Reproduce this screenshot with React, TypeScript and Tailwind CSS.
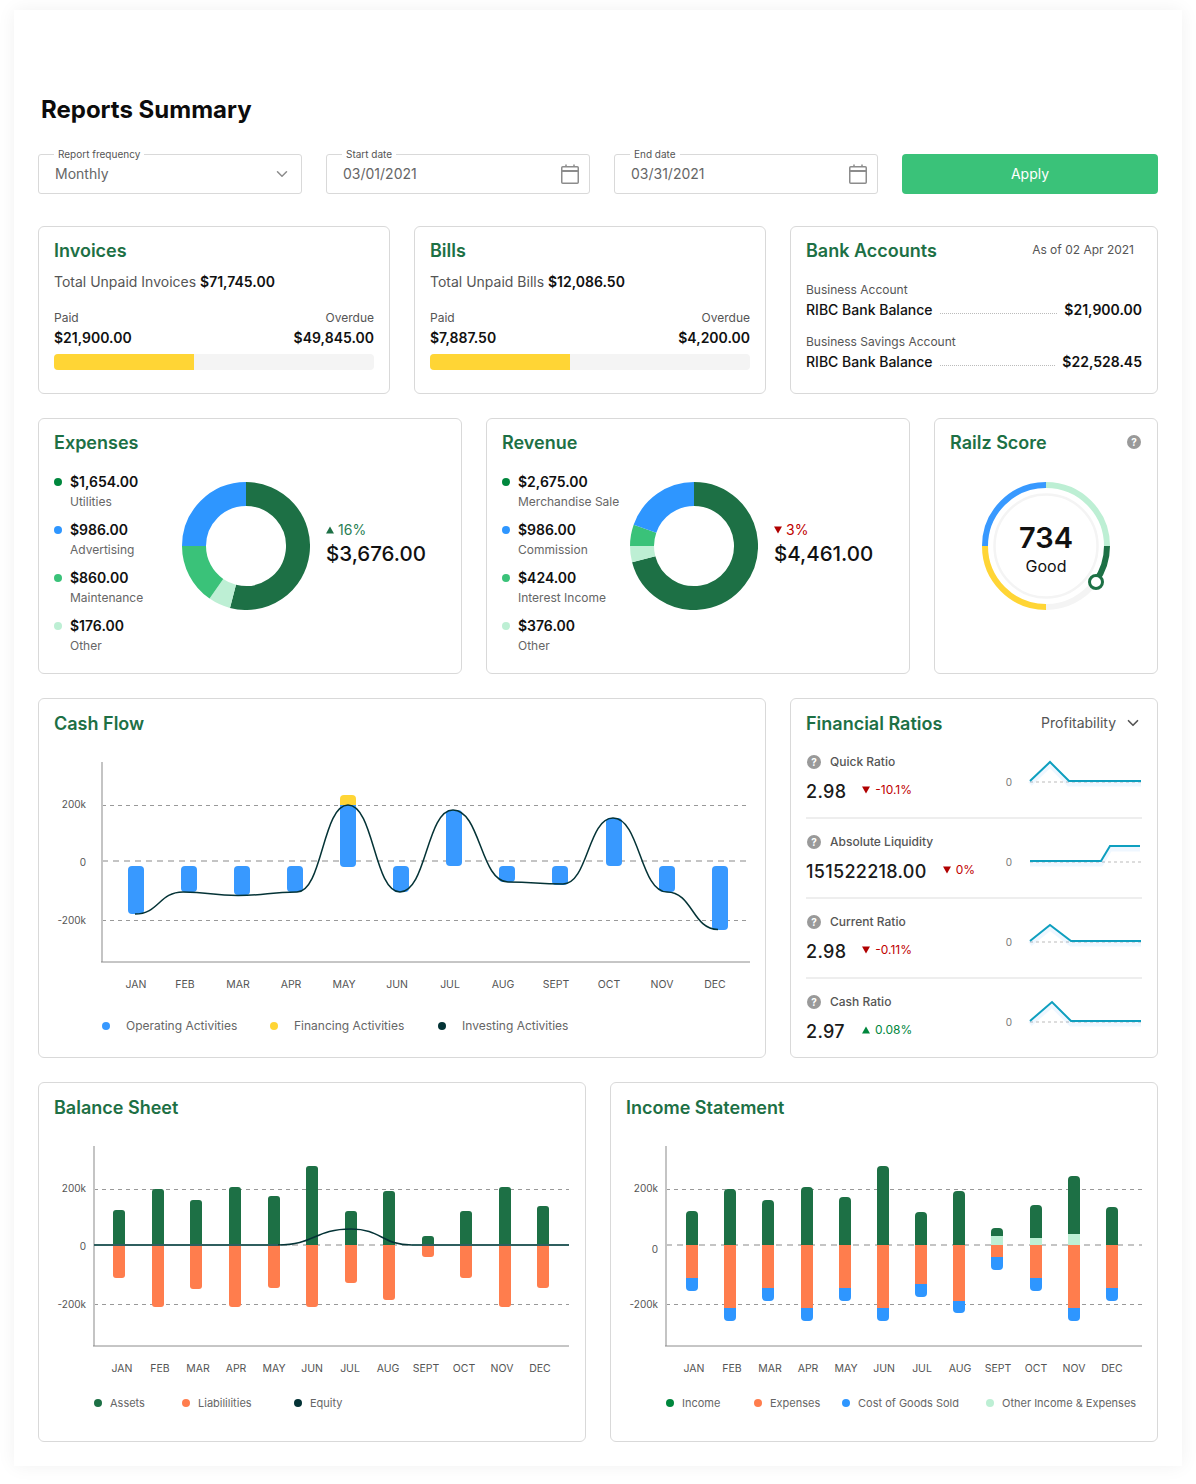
import { ChevronDown } from 'lucide-react';
import type { ReactNode } from 'react';

const DARK = '#1D7045';
const MID = '#3AC279';
const LIGHT = '#BDEFD4';
const BLUE = '#2E96FF';
const YELLOW = '#FFD535';
const ORANGE = '#FF7D4D';
const INK = '#043336';

const point = (cx: number, cy: number, r: number, deg: number) => {
    const rad = ((deg - 90) * Math.PI) / 180;
    return [cx + r * Math.cos(rad), cy + r * Math.sin(rad)];
};

const arc = (cx: number, cy: number, r: number, from: number, to: number) => {
    const [x0, y0] = point(cx, cy, r, from);
    const [x1, y1] = point(cx, cy, r, to);
    return `M${x0} ${y0} A${r} ${r} 0 ${to - from > 180 ? 1 : 0} 1 ${x1} ${y1}`;
};

const seg = (x: number, y0: number, y1: number, w: number, r: number, top: boolean, bottom: boolean) => {
    const t = top ? r : 0;
    const b = bottom ? r : 0;
    return `M${x} ${y0 + t} Q${x} ${y0} ${x + t} ${y0} L${x + w - t} ${y0} Q${x + w} ${y0} ${x + w} ${y0 + t} L${x + w} ${y1 - b} Q${x + w} ${y1} ${x + w - b} ${y1} L${x + b} ${y1} Q${x} ${y1} ${x} ${y1 - b} Z`;
};

const curve = (pts: number[][]) =>
    pts.reduce((d, [x, y], i) => {
        if (i === 0) return `M${x} ${y}`;
        const [px, py] = pts[i - 1];
        const mid = (x - px) / 2;
        return `${d} C${px + mid} ${py} ${x - mid} ${y} ${x} ${y}`;
    }, '');

const Card = ({ className, children }: { className: string; children: ReactNode }) => (
    <div className={`border border-[#d9d9d9] rounded-md bg-white px-[15px] ${className}`}>{children}</div>
);

const Title = ({ children }: { children: ReactNode }) => (
    <h2 className="text-lg leading-6 font-semibold text-[#1D7045]">{children}</h2>
);

const Help = () => (
    <span className="w-3.5 h-3.5 rounded-full bg-[#999] text-white text-[10px] leading-[14px] font-bold text-center shrink-0">?</span>
);

const Calendar = () => (
    <svg width="18" height="20" viewBox="0 0 18 20" fill="none" stroke="#8c8c8c" strokeWidth="1.5">
        <rect x="0.75" y="2.75" width="16.5" height="16.5" rx="1" />
        <path d="M1 7H17" strokeWidth="2" />
        <path d="M5 0.5V3M13 0.5V3" />
    </svg>
);

const Field = ({ label, value, icon }: { label: string; value: string; icon: ReactNode }) => (
    <div className="relative w-[264px] h-10 border border-[#d9d9d9] rounded-[3px] bg-white flex items-center justify-between pl-4 pr-[10px]">
        <span className="absolute left-[15px] top-[-6px] bg-white px-[4px] text-[10px] leading-[11px] text-[#555]">{label}</span>
        <span className="text-sm text-[#666]">{value}</span>
        {icon}
    </div>
);

const Triangle = ({ up, color, size = 8 }: { up: boolean; color: string; size?: number }) => (
    <svg width={size} height={size} viewBox="0 0 8 8" className="shrink-0">
        <path d={up ? 'M4 0.5L8 7.5H0Z' : 'M0 0.5H8L4 7.5Z'} fill={color} />
    </svg>
);

const UnpaidCard = ({ title, label, total, paid, overdue }: { title: string; label: string; total: string; paid: string; overdue: string }) => (
    <Card className="w-[352px] pt-3">
        <Title>{title}</Title>
        <p className="mt-[9px] text-sm leading-5 text-[#555]">
            {label} <span className="font-semibold text-[#111]">{total}</span>
        </p>
        <div className="mt-[18px] flex justify-between text-xs leading-4 text-[#555]">
            <span>Paid</span>
            <span>Overdue</span>
        </div>
        <div className="mt-[2px] flex justify-between text-sm leading-5 font-semibold text-[#111]">
            <span>{paid}</span>
            <span>{overdue}</span>
        </div>
        <div className="mt-[6px] h-4 rounded-sm bg-[#f4f4f4] overflow-hidden">
            <div className="h-full w-[140px] bg-[#FFD535]" />
        </div>
    </Card>
);

const BankRow = ({ label, amount }: { label: string; amount: string }) => (
    <div>
        <div className="text-xs leading-4 text-[#555]">{label}</div>
        <div className="mt-[2px] flex items-center text-sm leading-5 font-medium text-[#111]">
            <span>RIBC Bank Balance</span>
            <span className="flex-1 mx-[7px] mt-[7px] border-b border-dotted border-[#bbb]" />
            <span className="font-semibold">{amount}</span>
        </div>
    </div>
);

type Slice = { color: string; from: number; to: number };

const DonutCard = ({ title, items, slices, up, delta, total }: {
    title: string;
    items: { color: string; amount: string; label: string }[];
    slices: Slice[];
    up: boolean;
    delta: string;
    total: string;
}) => (
    <Card className="w-[424px] h-[256px] pt-3">
        <Title>{title}</Title>
        <div className="mt-[17px] flex">
            <div className="w-[128px] shrink-0">
                {items.map(item => (
                    <div key={item.label} className="h-12">
                        <div className="flex items-center gap-2 text-sm leading-5 font-semibold text-[#111]">
                            <span className="w-2 h-2 rounded-full" style={{ background: item.color }} />
                            {item.amount}
                        </div>
                        <div className="pl-4 text-xs leading-5 text-[#666] whitespace-nowrap">{item.label}</div>
                    </div>
                ))}
            </div>
            <svg width="128" height="128" viewBox="0 0 128 128" className="mt-[10px] shrink-0">
                {slices.map(s => (
                    <path key={s.from} d={arc(64, 64, 52, s.from, s.to)} fill="none" stroke={s.color} strokeWidth="24" />
                ))}
            </svg>
            <div className="ml-4 mt-[48px]">
                <div className={`flex items-center gap-[4px] text-sm leading-5 ${up ? 'text-[#2A7F55]' : 'text-[#C00000]'}`}>
                    <Triangle up={up} color={up ? DARK : '#B00000'} />
                    {delta}
                </div>
                <div className="text-[20.5px] leading-7 font-medium text-[#111]">{total}</div>
            </div>
        </div>
    </Card>
);

const Legend = ({ items, className }: { items: { label: string; color: string; width: string; gap: string }[]; className: string }) => (
    <div className={`flex ${className}`}>
        {items.map(item => (
            <div key={item.label} className={`flex items-center shrink-0 ${item.width} ${item.gap}`}>
                <span className="w-2 h-2 rounded-full shrink-0" style={{ background: item.color }} />
                <span className="whitespace-nowrap">{item.label}</span>
            </div>
        ))}
    </div>
);

const Axis = ({ x, right, top, bottom, rows, labelX }: { x: number; right: number; top: number; bottom: number; rows: { y: number; text: string; textY: number; zero?: boolean }[]; labelX: number }) => (
    <>
        {rows.map(r => (
            <g key={r.text}>
                <text x={labelX} y={r.textY} textAnchor="end" dominantBaseline="central" fontSize="10" fill="#555">{r.text}</text>
                <line
                    x1={x}
                    x2={right}
                    y1={r.y}
                    y2={r.y}
                    stroke={r.zero ? '#c4c4c4' : '#999'}
                    strokeWidth={r.zero ? 2 : 1}
                    strokeDasharray={r.zero ? '6 5' : '4 4'}
                />
            </g>
        ))}
        <line x1={x} x2={x} y1={top} y2={bottom} stroke="#c4c4c4" strokeWidth="2" />
        <line x1={x - 1} x2={right} y1={bottom} y2={bottom} stroke="#8c8c8c" strokeWidth="1" />
    </>
);

const Months = ({ xs, y }: { xs: number[]; y: number }) => (
    <>
        {['JAN', 'FEB', 'MAR', 'APR', 'MAY', 'JUN', 'JUL', 'AUG', 'SEPT', 'OCT', 'NOV', 'DEC'].map((m, i) => (
            <text key={m} x={xs[i]} y={y} textAnchor="middle" dominantBaseline="central" fontSize="10.5" fill="#555">{m}</text>
        ))}
    </>
);

const cashBars = [
    [128, 866, 914], [181, 866, 892], [234, 866, 895], [287, 866, 892], [340, 805, 867], [393, 866, 892],
    [446, 810, 866], [499, 866, 882], [552, 866, 885], [606, 818, 866], [659, 866, 892], [712, 866, 930],
];

const cashLine = [
    [135, 914], [183, 892], [238, 895.5], [297, 892], [348, 805], [400, 892],
    [453, 810], [508, 882], [563, 884], [613, 818], [667, 892], [718, 929.5],
];

const CashFlowChart = () => (
    <svg width="696" height="250" viewBox="54 750 696 250" className="block mt-[14px]">
        <Axis
            x={102}
            right={750}
            top={762}
            bottom={962}
            labelX={86}
            rows={[
                { y: 805.5, text: '200k', textY: 804 },
                { y: 861, text: '0', textY: 861.5, zero: true },
                { y: 920.5, text: '-200k', textY: 920 },
            ]}
        />
        <path d={seg(340, 795, 806, 16, 4, true, false)} fill={YELLOW} />
        {cashBars.map(([x, y0, y1]) => (
            <path key={x} d={seg(x, y0, y1, 16, 4, x !== 340, true)} fill="#3899FF" />
        ))}
        <path d={curve(cashLine)} fill="none" stroke={INK} strokeWidth="1.5" />
        <Months xs={[136, 185, 238, 291, 344, 397, 450, 503, 556, 609, 662, 715]} y={984} />
    </svg>
);

const balanceBars = [
    [113, 1210, 1278], [152, 1189, 1307], [190, 1200, 1289], [229, 1187, 1307], [268, 1196, 1288], [306, 1166, 1307],
    [345, 1211, 1283], [383, 1191, 1300], [422, 1236, 1257], [460, 1211, 1278], [499, 1187, 1307], [537, 1206, 1288],
];

const BalanceChart = () => (
    <svg width="516" height="250" viewBox="54 1134 516 250" className="block mt-[14px]">
        <Axis
            x={94}
            right={569}
            top={1146}
            bottom={1346}
            labelX={86}
            rows={[
                { y: 1189.5, text: '200k', textY: 1188 },
                { y: 1245, text: '0', textY: 1246, zero: true },
                { y: 1304.5, text: '-200k', textY: 1304 },
            ]}
        />
        {balanceBars.map(([x, top, bottom]) => (
            <g key={x}>
                <path d={seg(x, top, 1245, 12, 3, true, false)} fill={DARK} />
                <path d={seg(x, 1245, bottom, 12, 3, false, true)} fill={ORANGE} />
            </g>
        ))}
        <path d="M94 1245H278M412 1245H569" fill="none" stroke="#2F5F5F" strokeWidth="2" />
        <path d={curve([[278, 1245], [351, 1229], [412, 1245]])} fill="none" stroke={INK} strokeWidth="1.5" />
        <Months xs={[122, 160, 198, 236, 274, 312, 350, 388, 426, 464, 502, 540]} y={1368} />
    </svg>
);

// x, top of income, top of other (0 = none), bottom of expenses, bottom of cost of goods
const incomeBars = [
    [686, 1211, 0, 1278, 1291], [724, 1189, 0, 1308, 1321], [762, 1200, 0, 1288, 1301], [801, 1187, 0, 1308, 1321],
    [839, 1197, 0, 1288, 1301], [877, 1166, 0, 1308, 1321], [915, 1212, 0, 1284, 1297], [953, 1191, 0, 1301, 1313],
    [991, 1228, 1236, 1257, 1270], [1030, 1205, 1238, 1278, 1291], [1068, 1176, 1234, 1308, 1321], [1106, 1207, 0, 1288, 1301],
];

const IncomeChart = () => (
    <svg width="516" height="250" viewBox="626 1134 516 250" className="block mt-[14px]">
        <Axis
            x={666}
            right={1142}
            top={1146}
            bottom={1346}
            labelX={658}
            rows={[
                { y: 1189.5, text: '200k', textY: 1188 },
                { y: 1245, text: '0', textY: 1249, zero: true },
                { y: 1304.5, text: '-200k', textY: 1304 },
            ]}
        />
        {incomeBars.map(([x, top, other, exp, cost]) => (
            <g key={x}>
                <path d={seg(x, top, other || 1245, 12, 4, true, false)} fill={DARK} />
                {other > 0 && <rect x={x} y={other} width="12" height={1245 - other} fill={LIGHT} />}
                <rect x={x} y={1245} width="12" height={exp - 1245} fill={ORANGE} />
                <path d={seg(x, exp, cost, 12, 4, false, true)} fill={BLUE} />
            </g>
        ))}
        <Months xs={[694, 732, 770, 808, 846, 884, 922, 960, 998, 1036, 1074, 1112]} y={1368} />
    </svg>
);

const ratios = [
    { label: 'Quick Ratio', value: '2.98', up: false, delta: '-10.1%', line: '1030,42 1050,23 1069,42 1141,42' },
    { label: 'Absolute Liquidity', value: '151522218.00', up: false, delta: '0%', line: '1030,42 1101,42 1110,27 1140,27' },
    { label: 'Current Ratio', value: '2.98', up: false, delta: '-0.11%', line: '1030,42 1050,26 1071,42 1141,42' },
    { label: 'Cash Ratio', value: '2.97', up: true, delta: '0.08%', line: '1030,42 1052,23 1071,42 1141,42' },
];

const RatioRow = ({ label, value, up, delta, line, last }: { label: string; value: string; up: boolean; delta: string; line: string; last: boolean }) => (
    <div className={`h-20 flex justify-between ${last ? '' : 'border-b-2 border-[#eee]'}`}>
        <div className="pt-[15px]">
            <div className="flex items-center gap-2 text-xs leading-4 font-medium text-[#555]">
                <span className="w-4 flex justify-center"><Help /></span>
                {label}
            </div>
            <div className="mt-[10px] flex items-center">
                <span className="min-w-[40px] text-lg leading-6 font-medium tracking-[0.3px] text-[#1a1a1a]">{value}</span>
                <span className={`ml-4 mb-[4px] flex items-center gap-[5px] text-xs ${up ? 'text-[#00873D]' : 'text-[#C00000]'}`}>
                    <Triangle up={up} color={up ? '#00873D' : '#B00000'} />
                    {delta}
                </span>
            </div>
        </div>
        <svg width="142" height="78" viewBox="1000 0 142 78" className="shrink-0">
            <text x="1009" y="43" textAnchor="middle" dominantBaseline="central" fontSize="10" fill="#777">0</text>
            <line x1="1030" x2="1142" y1="43" y2="43" stroke="#bbb" strokeWidth="1" strokeDasharray="3 3" />
            <polyline points={line} fill="none" stroke="#2E96FF" strokeOpacity="0.08" strokeWidth="5" transform="translate(0 3)" />
            <polyline points={line} fill="none" stroke="#0E9FBF" strokeWidth="2" />
        </svg>
    </div>
);

const ScoreGauge = () => (
    <div className="relative w-32 h-32 mx-auto mt-[27px]">
        <svg width="128" height="128" viewBox="0 0 128 128">
            <circle cx="64" cy="64" r="51.5" fill="none" stroke="#f4f4f4" strokeWidth="2.5" />
            <path d={arc(64, 64, 61, 0, 90)} fill="none" stroke={LIGHT} strokeWidth="6" />
            <path d={arc(64, 64, 61, 90, 126)} fill="none" stroke={DARK} strokeWidth="6" />
            <path d={arc(64, 64, 61, 126, 180)} fill="none" stroke="#f4f4f4" strokeWidth="6" />
            <path d={arc(64, 64, 61, 180, 270)} fill="none" stroke={YELLOW} strokeWidth="6" />
            <path d={arc(64, 64, 61, 270, 360)} fill="none" stroke="#3899FF" strokeWidth="6" />
            <circle cx="114" cy="100" r="6.5" fill="#fff" stroke={DARK} strokeWidth="3" />
        </svg>
        <div className="absolute inset-0 flex flex-col items-center text-[#111]">
            <span className="mt-[39px] text-[29px] leading-[34px] font-semibold">734</span>
            <span className="text-base leading-[22px]">Good</span>
        </div>
    </div>
);

export default function App() {
    return (
        <div className="min-h-[1484px] bg-white pt-[10px] pl-[14px] [font-family:Inter,'Liberation_Sans',sans-serif]">
            <div className="w-[1168px] h-[1456px] bg-white px-6 pt-[84px] shadow-[0_0_18px_rgba(0,0,0,0.06)]">
                <h1 className="pl-[3px] text-2xl leading-8 font-bold text-[#0c0c0c]">Reports Summary</h1>

                <div className="mt-7 flex gap-6">
                    <Field label="Report frequency" value="Monthly" icon={<ChevronDown size={18} color="#8c8c8c" />} />
                    <Field label="Start date" value="03/01/2021" icon={<Calendar />} />
                    <Field label="End date" value="03/31/2021" icon={<Calendar />} />
                    <button className="w-[256px] h-10 rounded bg-[#3AC279] text-sm font-normal text-white">Apply</button>
                </div>

                <div className="mt-8 flex gap-6 h-[168px]">
                    <UnpaidCard title="Invoices" label="Total Unpaid Invoices" total="$71,745.00" paid="$21,900.00" overdue="$49,845.00" />
                    <UnpaidCard title="Bills" label="Total Unpaid Bills" total="$12,086.50" paid="$7,887.50" overdue="$4,200.00" />
                    <Card className="w-[368px] pt-3">
                        <div className="flex justify-between">
                            <Title>Bank Accounts</Title>
                            <span className="mr-[8px] text-xs leading-[22px] text-[#555]">As of 02 Apr 2021</span>
                        </div>
                        <div className="mt-[19px] flex flex-col gap-[14px]">
                            <BankRow label="Business Account" amount="$21,900.00" />
                            <BankRow label="Business Savings Account" amount="$22,528.45" />
                        </div>
                    </Card>
                </div>

                <div className="mt-6 flex gap-6">
                    <DonutCard
                        title="Expenses"
                        items={[
                            { color: '#00873D', amount: '$1,654.00', label: 'Utilities' },
                            { color: BLUE, amount: '$986.00', label: 'Advertising' },
                            { color: MID, amount: '$860.00', label: 'Maintenance' },
                            { color: LIGHT, amount: '$176.00', label: 'Other' },
                        ]}
                        slices={[
                            { color: DARK, from: 0, to: 194.5 },
                            { color: LIGHT, from: 194.5, to: 214.7 },
                            { color: MID, from: 214.7, to: 270 },
                            { color: BLUE, from: 270, to: 360 },
                        ]}
                        up
                        delta="16%"
                        total="$3,676.00"
                    />
                    <DonutCard
                        title="Revenue"
                        items={[
                            { color: '#00873D', amount: '$2,675.00', label: 'Merchandise Sale' },
                            { color: BLUE, amount: '$986.00', label: 'Commission' },
                            { color: MID, amount: '$424.00', label: 'Interest Income' },
                            { color: LIGHT, amount: '$376.00', label: 'Other' },
                        ]}
                        slices={[
                            { color: DARK, from: 0, to: 255.3 },
                            { color: LIGHT, from: 255.3, to: 270 },
                            { color: MID, from: 270, to: 289.5 },
                            { color: BLUE, from: 289.5, to: 360 },
                        ]}
                        up={false}
                        delta="3%"
                        total="$4,461.00"
                    />
                    <Card className="w-[224px] h-[256px] pt-3">
                        <div className="flex items-center justify-between pr-[1px]">
                            <Title>Railz Score</Title>
                            <span className="flex mb-[2px]"><Help /></span>
                        </div>
                        <ScoreGauge />
                    </Card>
                </div>

                <div className="mt-6 flex gap-6">
                    <Card className="w-[728px] h-[360px] pt-[13px]">
                        <Title>Cash Flow</Title>
                        <CashFlowChart />
                        <Legend
                            className="mt-4 pl-12 h-5 text-xs text-[#666]"
                            items={[
                                { label: 'Operating Activities', color: '#3899FF', width: 'w-[168px]', gap: 'gap-4' },
                                { label: 'Financing Activities', color: YELLOW, width: 'w-[168px]', gap: 'gap-4' },
                                { label: 'Investing Activities', color: INK, width: 'w-[168px]', gap: 'gap-4' },
                            ]}
                        />
                    </Card>
                    <Card className="w-[368px] h-[360px] pt-[13px]">
                        <div className="flex items-center justify-between mb-[3px]">
                            <Title>Financial Ratios</Title>
                            <span className="flex items-center gap-[8px] mb-[2px] text-sm text-[#555]">
                                Profitability
                                <ChevronDown size={18} color="#555" strokeWidth={2.25} />
                            </span>
                        </div>
                        {ratios.map((r, i) => (
                            <RatioRow key={r.label} {...r} last={i === ratios.length - 1} />
                        ))}
                    </Card>
                </div>

                <div className="mt-6 flex gap-6">
                    <Card className="w-[548px] h-[360px] pt-[13px]">
                        <Title>Balance Sheet</Title>
                        <BalanceChart />
                        <Legend
                            className="mt-[9px] pl-10 h-5 text-[11px] text-[#666]"
                            items={[
                                { label: 'Assets', color: DARK, width: 'w-[88px]', gap: 'gap-2' },
                                { label: 'Liabililities', color: ORANGE, width: 'w-[112px]', gap: 'gap-2' },
                                { label: 'Equity', color: INK, width: 'w-[88px]', gap: 'gap-2' },
                            ]}
                        />
                    </Card>
                    <Card className="w-[548px] h-[360px] pt-[13px]">
                        <Title>Income Statement</Title>
                        <IncomeChart />
                        <Legend
                            className="mt-[9px] pl-10 h-5 text-[11px] text-[#666]"
                            items={[
                                { label: 'Income', color: '#00873D', width: 'w-[88px]', gap: 'gap-2' },
                                { label: 'Expenses', color: ORANGE, width: 'w-[88px]', gap: 'gap-2' },
                                { label: 'Cost of Goods Sold', color: BLUE, width: 'w-[144px]', gap: 'gap-2' },
                                { label: 'Other Income & Expenses', color: LIGHT, width: 'w-[150px]', gap: 'gap-2' },
                            ]}
                        />
                    </Card>
                </div>
            </div>
        </div>
    );
}
